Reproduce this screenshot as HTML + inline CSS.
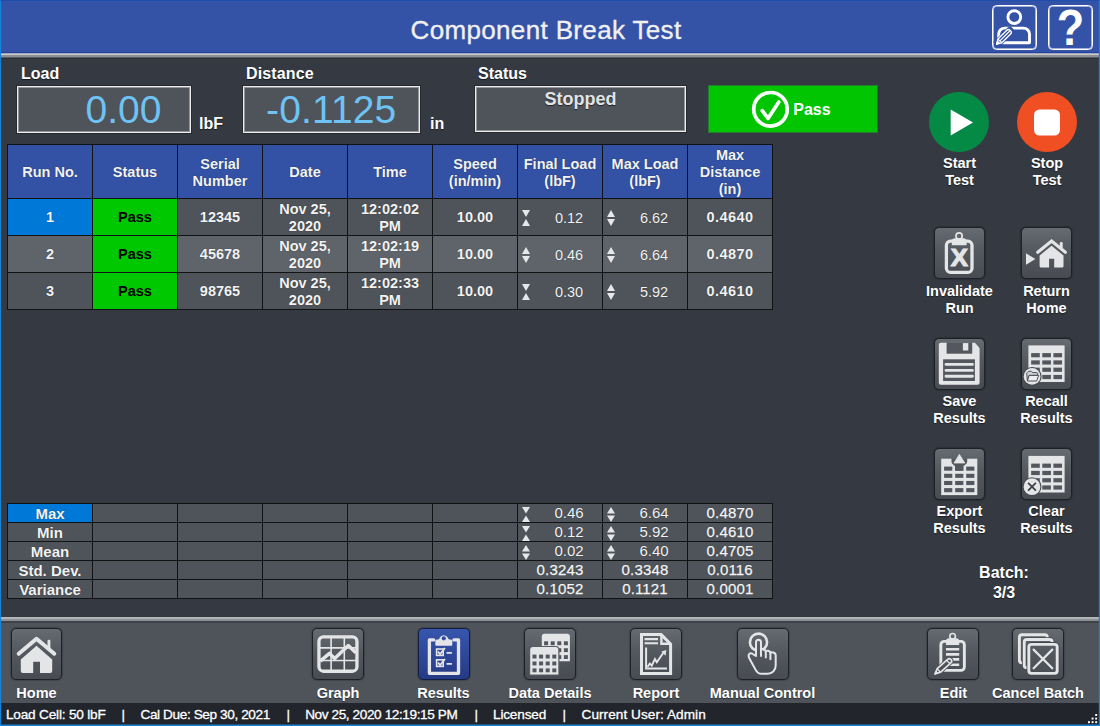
<!DOCTYPE html>
<html>
<head>
<meta charset="utf-8">
<title>Component Break Test</title>
<style>
*{box-sizing:border-box;margin:0;padding:0}
html,body{width:1100px;height:726px;overflow:hidden}
body{background:#353a42;font-family:"Liberation Sans",sans-serif;color:#fff;position:relative;font-weight:bold}
.abs{position:absolute}
#frame{position:absolute;left:0;top:0;width:1100px;height:726px;border:solid #1583d8;border-width:1px 1px 1px 1px;border-top-color:#1f4fae;pointer-events:none;z-index:50;box-shadow:inset 0 -1px 0 rgba(21,131,216,.5), inset -1px 0 0 rgba(21,131,216,.2), inset 1px 0 0 rgba(21,131,216,.12)}
#hdr{position:absolute;left:0;top:0;width:1100px;height:53px;background:#3452a6;border-bottom:1px solid #2342a2}
#hdr .t{position:absolute;left:0;width:1092px;top:15px;text-align:center;font-size:26px;font-weight:normal;color:#f0f0f0;letter-spacing:0.35px;-webkit-text-stroke:0.35px #f0f0f0}
.sep{position:absolute;left:0;width:1100px;height:5px;background:linear-gradient(#b4b7ba,#8d9195 50%,#5a5e64)}
.lbl{position:absolute;font-size:16px;font-weight:bold;color:#fff;white-space:nowrap;text-shadow:0 1px 1px rgba(0,0,0,.6)}
.box{position:absolute;background:#4f545b;border:1px solid #ededee;box-shadow:0 0 0 1px #262a30, inset 0 0 0 1px rgba(255,255,255,.38)}
.big{position:absolute;font-size:39px;font-weight:normal;color:#6ec3f4;white-space:nowrap}
table{position:absolute;border-collapse:collapse;table-layout:fixed}
td,th{border:1px solid #101214;text-align:center;vertical-align:middle;font-size:14.5px;font-weight:bold;color:#f3f3f3;overflow:hidden;padding:0;line-height:17px;text-shadow:0 0 1px rgba(0,0,0,.55)}
th{background:#3351a5;padding-top:2px}
#t1 td{padding-top:1px}
#t1 td{background:#4f545b}
#t1 tr.alt td{background:#5f646b}
#t1 tr td.g{background:#00c800;color:#000;text-shadow:none}
td.sel{background:#0078d7 !important}
td.n{font-weight:normal;position:relative}
#t1 td.n{padding-top:3px}
td.i{padding-left:18px}
#t1 td:last-child{letter-spacing:0.45px}
#t2 td{background:#4f545b;height:19px;line-height:17px;font-size:15px}
#t2 td.n{font-size:15px;letter-spacing:0.15px;-webkit-text-stroke:0.25px #fff}
#t2 td.i{letter-spacing:0;-webkit-text-stroke:0}
#t2 .ic{height:15px;margin-top:-6.5px}
#t2 td.n{padding-bottom:1px}
.ic{position:absolute;left:4px;top:50%;margin-top:-7px;width:8px;height:16px}
.btn{position:absolute;width:51px;height:52px;border:1px solid #1d2024;border-radius:5px;background:linear-gradient(#666b72,#54595f 45%,#484c52);box-shadow:0 0 1.5px rgba(0,0,0,.85)}
.btn svg{display:block}
.btn.act{background:linear-gradient(#3856ad,#2e4899 50%,#253a84);border-color:#131d42}
.hb{width:45px;height:45px;border:1px solid #fff;border-radius:4.5px;box-shadow:inset 0 0 0 1px rgba(255,255,255,.55)}
.bl{position:absolute;font-size:14.5px;font-weight:bold;color:#fff;text-align:center;line-height:17px;white-space:nowrap;text-shadow:0 1px 1px rgba(0,0,0,.5)}
#tb{position:absolute;left:0;top:623px;width:1100px;height:80px;background:#4f545b}
#sb{position:absolute;left:0;top:703px;width:1100px;height:23px;background:#22262c;font-size:13.6px;font-weight:normal;color:#fff;white-space:pre;-webkit-text-stroke:0.3px #fff}
#sb span{position:absolute;top:3.5px}
</style>
</head>
<body>
<div id="hdr"><div class="t">Component Break Test</div></div>
<div class="sep" style="top:53px;height:6px;background:linear-gradient(#a3a8c2 0 1px,#cbc9c0 1px 2px,#8a8f99 2px 4px,#585c63 4px 5px,#2b2e33 5px 6px)"></div>

<div class="lbl" style="left:21px;top:64.5px">Load</div>
<div class="box" style="left:17px;top:86px;width:174px;height:47px"></div>
<div class="big" style="left:85.5px;top:87.5px">0.00</div>
<div class="lbl" style="left:199px;top:115px">lbF</div>

<div class="lbl" style="left:246px;top:64.5px;letter-spacing:0.15px">Distance</div>
<div class="box" style="left:243px;top:86px;width:177px;height:47px"></div>
<div class="big" style="left:266px;top:87.5px;letter-spacing:0.15px">-0.1125</div>
<div class="lbl" style="left:430px;top:115px">in</div>

<div class="lbl" style="left:478px;top:64.5px">Status</div>
<div class="box" style="left:475px;top:86px;width:211px;height:46px"></div>
<div class="lbl" style="left:475px;width:211px;top:88.7px;text-align:center;font-size:18px;color:#e2e3e4">Stopped</div>

<div class="abs" style="left:708px;top:85px;width:170px;height:48px;background:#00c500;border:1px solid #257a32"></div>
<div class="lbl" style="left:793.3px;top:101px;font-size:16px;text-shadow:none">Pass</div>

<table id="t1" style="left:7px;top:144px;width:766px">
<tr style="height:54px"><th>Run No.</th><th>Status</th><th>Serial<br>Number</th><th>Date</th><th>Time</th><th>Speed<br>(in/min)</th><th>Final Load<br>(lbF)</th><th>Max Load<br>(lbF)</th><th>Max<br>Distance<br>(in)</th></tr>
<tr style="height:37px"><td class="sel">1</td><td class="g">Pass</td><td>12345</td><td>Nov 25,<br>2020</td><td>12:02:02<br>PM</td><td>10.00</td><td class="n i"><svg class="ic" viewBox="0 0 8 16" preserveAspectRatio="none"><path d="M0 0 H8 L4 7 Z M4 9 L8 16 H0 Z" fill="#e6e7e9"/></svg>0.12</td><td class="n i"><svg class="ic" viewBox="0 0 8 16" preserveAspectRatio="none"><path d="M4 0 L8 7 H0 Z M0 9 H8 L4 16 Z" fill="#e6e7e9"/></svg>6.62</td><td>0.4640</td></tr>
<tr style="height:37px" class="alt"><td>2</td><td class="g">Pass</td><td>45678</td><td>Nov 25,<br>2020</td><td>12:02:19<br>PM</td><td>10.00</td><td class="n i"><svg class="ic" viewBox="0 0 8 16" preserveAspectRatio="none"><path d="M4 0 L8 7 H0 Z M0 9 H8 L4 16 Z" fill="#e6e7e9"/></svg>0.46</td><td class="n i"><svg class="ic" viewBox="0 0 8 16" preserveAspectRatio="none"><path d="M4 0 L8 7 H0 Z M0 9 H8 L4 16 Z" fill="#e6e7e9"/></svg>6.64</td><td>0.4870</td></tr>
<tr style="height:37px"><td>3</td><td class="g">Pass</td><td>98765</td><td>Nov 25,<br>2020</td><td>12:02:33<br>PM</td><td>10.00</td><td class="n i"><svg class="ic" viewBox="0 0 8 16" preserveAspectRatio="none"><path d="M0 0 H8 L4 7 Z M4 9 L8 16 H0 Z" fill="#e6e7e9"/></svg>0.30</td><td class="n i"><svg class="ic" viewBox="0 0 8 16" preserveAspectRatio="none"><path d="M4 0 L8 7 H0 Z M0 9 H8 L4 16 Z" fill="#e6e7e9"/></svg>5.92</td><td>0.4610</td></tr>
</table>

<table id="t2" style="left:7px;top:503px;width:766px">
<tr><td class="sel">Max</td><td></td><td></td><td></td><td></td><td></td><td class="n i"><svg class="ic" viewBox="0 0 8 16" preserveAspectRatio="none"><path d="M0 0 H8 L4 7 Z M4 9 L8 16 H0 Z" fill="#e6e7e9"/></svg>0.46</td><td class="n i"><svg class="ic" viewBox="0 0 8 16" preserveAspectRatio="none"><path d="M4 0 L8 7 H0 Z M0 9 H8 L4 16 Z" fill="#e6e7e9"/></svg>6.64</td><td class="n">0.4870</td></tr>
<tr><td>Min</td><td></td><td></td><td></td><td></td><td></td><td class="n i"><svg class="ic" viewBox="0 0 8 16" preserveAspectRatio="none"><path d="M0 0 H8 L4 7 Z M4 9 L8 16 H0 Z" fill="#e6e7e9"/></svg>0.12</td><td class="n i"><svg class="ic" viewBox="0 0 8 16" preserveAspectRatio="none"><path d="M4 0 L8 7 H0 Z M0 9 H8 L4 16 Z" fill="#e6e7e9"/></svg>5.92</td><td class="n">0.4610</td></tr>
<tr><td>Mean</td><td></td><td></td><td></td><td></td><td></td><td class="n i"><svg class="ic" viewBox="0 0 8 16" preserveAspectRatio="none"><path d="M4 0 L8 7 H0 Z M0 9 H8 L4 16 Z" fill="#e6e7e9"/></svg>0.02</td><td class="n i"><svg class="ic" viewBox="0 0 8 16" preserveAspectRatio="none"><path d="M4 0 L8 7 H0 Z M0 9 H8 L4 16 Z" fill="#e6e7e9"/></svg>6.40</td><td class="n">0.4705</td></tr>
<tr><td>Std. Dev.</td><td></td><td></td><td></td><td></td><td></td><td class="n">0.3243</td><td class="n">0.3348</td><td class="n">0.0116</td></tr>
<tr><td>Variance</td><td></td><td></td><td></td><td></td><td></td><td class="n">0.1052</td><td class="n">0.1121</td><td class="n">0.0001</td></tr>
</table>

<div class="sep" style="top:617px;height:6px;background:linear-gradient(#b3b5b7 0 2px,#8b9097 2px 4px,#3e4248 4px 6px)"></div>
<div id="tb"></div>
<div id="sb"><span style="left:6px;letter-spacing:-0.19px">Load Cell: 50 lbF</span><span style="left:121.5px">|</span><span style="left:140.5px;letter-spacing:-0.39px">Cal Due: Sep 30, 2021</span><span style="left:286.5px">|</span><span style="left:305.2px;letter-spacing:-0.40px">Nov 25, 2020 12:19:15 PM</span><span style="left:474.5px">|</span><span style="left:493px;letter-spacing:-0.17px">Licensed</span><span style="left:562.5px">|</span><span style="left:581.5px;letter-spacing:0.06px">Current User: Admin</span></div>
<div class="abs" style="left:929px;top:92px;width:60px;height:60px;border-radius:50%;background:#048a45"><svg width="60" height="60" viewBox="0 0 60 60"><path d="M21.7 17.5 L44 30.5 L21.7 43.5 Z" fill="#fff"/></svg></div>
<div class="abs" style="left:1017px;top:92px;width:60px;height:60px;border-radius:50%;background:#f04e23"><svg width="60" height="60" viewBox="0 0 60 60"><rect x="17" y="17.5" width="26" height="26" rx="5.5" fill="#fff"/></svg></div>
<div class="bl" style="left:899.5px;width:120px;top:154.5px">Start<br>Test</div>
<div class="bl" style="left:987.0px;width:120px;top:154.5px">Stop<br>Test</div>
<div class="btn" style="left:934px;top:227px;width:51px"><svg width="49" height="49" viewBox="1.0 0.6 49 49"><rect x="12.4" y="13.7" width="25.6" height="31.3" rx="4.2" fill="none" stroke="#e4e5e7" stroke-width="3.3"/>
<circle cx="25.1" cy="8.6" r="3.1" fill="none" stroke="#e4e5e7" stroke-width="1.7"/>
<path d="M17.8 17.8 V14.2 a3.4 3.4 0 0 1 3.4 -3.4 h8 a3.4 3.4 0 0 1 3.4 3.4 V17.8 Z" fill="#e4e5e7"/>
<text transform="translate(25.2 38.4) scale(1.06 1)" font-family="Liberation Sans,sans-serif" font-weight="bold" font-size="24.2" text-anchor="middle" fill="#e4e5e7" stroke="#e4e5e7" stroke-width="1.1">X</text></svg></div>
<div class="btn" style="left:1021px;top:227px;width:51px"><svg width="49" height="49" viewBox="0.6 0.6 49 49"><path d="M4.6 25.9 L14 31.7 L4.6 37.4 Z" fill="#e4e5e7"/>
<path d="M16.3 24.9 L30.2 13.7 L44 24.9" fill="none" stroke="#e4e5e7" stroke-width="3.2" stroke-linecap="round"/>
<rect x="38.4" y="14.5" width="2.9" height="7" rx="1.2" fill="#e4e5e7"/>
<path d="M30.2 18.4 L42.1 28 V38.6 a1.5 1.5 0 0 1 -1.5 1.5 H32.8 V31.4 H27.7 V40.1 H19.7 a1.5 1.5 0 0 1 -1.5 -1.5 V28 Z" fill="#e4e5e7"/></svg></div>
<div class="bl" style="left:899.5px;width:120px;top:282.6px">Invalidate<br>Run</div>
<div class="bl" style="left:986.5px;width:120px;top:282.6px">Return<br>Home</div>
<div class="btn" style="left:934px;top:338px;width:51px"><svg width="49" height="49" viewBox="1.0 0.6 49 49"><path d="M4.8 6.4 a2 2 0 0 1 2 -2 H40.9 L45.6 9.5 V44.3 a2 2 0 0 1 -2 2 H6.8 a2 2 0 0 1 -2 -2 Z" fill="#e4e5e7"/>
<rect x="12.6" y="4" width="25.6" height="11.3" fill="#54585e"/>
<rect x="28.9" y="4.7" width="5.4" height="7.4" fill="#e4e5e7"/>
<rect x="9.1" y="20.9" width="31.8" height="21.7" fill="#54585e"/>
<path d="M12 26 H38.4 M12 32 H38.4 M12 37.9 H38.4" stroke="#e4e5e7" stroke-width="2.9" stroke-linecap="round"/></svg></div>
<div class="btn" style="left:1021px;top:338px;width:51px"><svg width="49" height="49" viewBox="0.6 0.6 49 49"><rect x="7" y="7.0" width="36.2" height="36.6" fill="#e4e5e7"/><rect x="9.75" y="14.70" width="8.65" height="4.2" fill="#54585e"/><rect x="20.88" y="14.70" width="8.65" height="4.2" fill="#54585e"/><rect x="32.01" y="14.70" width="8.65" height="4.2" fill="#54585e"/><rect x="9.75" y="21.97" width="8.65" height="4.2" fill="#54585e"/><rect x="20.88" y="21.97" width="8.65" height="4.2" fill="#54585e"/><rect x="32.01" y="21.97" width="8.65" height="4.2" fill="#54585e"/><rect x="9.75" y="29.24" width="8.65" height="4.2" fill="#54585e"/><rect x="20.88" y="29.24" width="8.65" height="4.2" fill="#54585e"/><rect x="32.01" y="29.24" width="8.65" height="4.2" fill="#54585e"/><rect x="9.75" y="36.51" width="8.65" height="4.2" fill="#54585e"/><rect x="20.88" y="36.51" width="8.65" height="4.2" fill="#54585e"/><rect x="32.01" y="36.51" width="8.65" height="4.2" fill="#54585e"/><circle cx="10.7" cy="38" r="9.5" fill="#464a50"/><circle cx="10.7" cy="38" r="8.4" fill="#e4e5e7"/>
<path d="M5.3 35 c0 -0.6 0.3 -0.9 0.8 -1.1 l1.1 -1 h2.8 l1.4 1.3 h4 c0.5 0 0.8 0.3 0.8 0.8 V37 H7.7 L6 42.4 Z" fill="#cfd0d3" stroke="#4d5157" stroke-width="1" stroke-linejoin="round"/>
<path d="M7.7 37 H17.3 L15.2 42.6 H6 Z" fill="#eeeeef" stroke="#4d5157" stroke-width="1" stroke-linejoin="round"/></svg></div>
<div class="bl" style="left:899.5px;width:120px;top:393px">Save<br>Results</div>
<div class="bl" style="left:986.5px;width:120px;top:393px">Recall<br>Results</div>
<div class="btn" style="left:934px;top:448px;width:51px"><svg width="49" height="49" viewBox="1.0 0.6 49 49"><rect x="7.2" y="10.3" width="36.1" height="36.4" fill="#e4e5e7"/><rect x="10.10" y="18.20" width="8.2" height="4.1" fill="#54585e"/><rect x="21.15" y="18.20" width="8.2" height="4.1" fill="#54585e"/><rect x="32.20" y="18.20" width="8.2" height="4.1" fill="#54585e"/><rect x="10.10" y="25.37" width="8.2" height="4.1" fill="#54585e"/><rect x="21.15" y="25.37" width="8.2" height="4.1" fill="#54585e"/><rect x="32.20" y="25.37" width="8.2" height="4.1" fill="#54585e"/><rect x="10.10" y="32.54" width="8.2" height="4.1" fill="#54585e"/><rect x="21.15" y="32.54" width="8.2" height="4.1" fill="#54585e"/><rect x="32.20" y="32.54" width="8.2" height="4.1" fill="#54585e"/><rect x="10.10" y="39.71" width="8.2" height="4.1" fill="#54585e"/><rect x="21.15" y="39.71" width="8.2" height="4.1" fill="#54585e"/><rect x="32.20" y="39.71" width="8.2" height="4.1" fill="#54585e"/><path d="M17.5 9.8 H33.2 V13 C33.2 16.2 29.3 16.4 29.3 18.6 V22.3 H21.2 V18.6 C21.2 16.4 17.5 16.2 17.5 13 Z" fill="#54585e"/><path d="M25.4 6 L30.8 14.6 H20 Z" fill="#e4e5e7" stroke="#e4e5e7" stroke-width="0.8" stroke-linejoin="round"/></svg></div>
<div class="btn" style="left:1021px;top:448px;width:51px"><svg width="49" height="49" viewBox="0.6 0.6 49 49"><rect x="7" y="7.5" width="36.2" height="36.6" fill="#e4e5e7"/><rect x="9.75" y="15.20" width="8.65" height="4.2" fill="#54585e"/><rect x="20.88" y="15.20" width="8.65" height="4.2" fill="#54585e"/><rect x="32.01" y="15.20" width="8.65" height="4.2" fill="#54585e"/><rect x="9.75" y="22.47" width="8.65" height="4.2" fill="#54585e"/><rect x="20.88" y="22.47" width="8.65" height="4.2" fill="#54585e"/><rect x="32.01" y="22.47" width="8.65" height="4.2" fill="#54585e"/><rect x="9.75" y="29.74" width="8.65" height="4.2" fill="#54585e"/><rect x="20.88" y="29.74" width="8.65" height="4.2" fill="#54585e"/><rect x="32.01" y="29.74" width="8.65" height="4.2" fill="#54585e"/><rect x="9.75" y="37.01" width="8.65" height="4.2" fill="#54585e"/><rect x="20.88" y="37.01" width="8.65" height="4.2" fill="#54585e"/><rect x="32.01" y="37.01" width="8.65" height="4.2" fill="#54585e"/><circle cx="10.6" cy="38.3" r="9.5" fill="#464a50"/><circle cx="10.6" cy="38.3" r="8.4" fill="#e4e5e7"/>
<path d="M6.7 34.4 L14.5 42.3 M14.5 34.4 L6.7 42.3" stroke="#3a3e44" stroke-width="1.7"/></svg></div>
<div class="bl" style="left:899.5px;width:120px;top:503px">Export<br>Results</div>
<div class="bl" style="left:986.5px;width:120px;top:503px">Clear<br>Results</div>
<div class="bl" style="left:944px;width:120px;top:562.6px;font-size:16px;line-height:20px">Batch:<br>3/3</div>
<div class="btn" style="left:11px;top:628px;width:51px"><svg width="49" height="49" viewBox="1.0 0.6 49 49"><path d="M7.7 25.4 L25.5 10.4 L43.3 25.4" fill="none" stroke="#e4e5e7" stroke-width="4" stroke-linecap="round" stroke-linejoin="round"/>
<rect x="36.5" y="11.4" width="2.9" height="9" rx="1.3" fill="#e4e5e7"/>
<path d="M25.5 17.3 L41.2 31.2 V42.7 a2 2 0 0 1 -2 2 H29 V33.4 H22.2 V44.7 H11.8 a2 2 0 0 1 -2 -2 V31.2 Z" fill="#e4e5e7"/></svg></div>
<div class="bl" style="left:-23.5px;width:120px;top:684.5px">Home</div>
<div class="btn" style="left:312px;top:628px;width:52px"><svg width="49" height="49" viewBox="0.9 0.6 49 49"><rect x="6.85" y="8.55" width="38" height="34.3" rx="4.5" fill="none" stroke="#e4e5e7" stroke-width="3.3"/>
<path d="M19 9 V43 M32.2 9 V43 M7 19.5 H45 M7 32.1 H45" stroke="#e4e5e7" stroke-width="1.6" fill="none"/>
<path d="M8.1 32.7 L17.4 25 L22.6 30 L36.2 17.2 L43.8 24.4" fill="none" stroke="#e4e5e7" stroke-width="3.5" stroke-linejoin="round"/></svg></div>
<div class="bl" style="left:278.0px;width:120px;top:684.5px">Graph</div>
<div class="btn act" style="left:418px;top:628px;width:52px"><svg width="49" height="49" viewBox="0.6 0.6 49 49"><path d="M15.3 11.5 H11 V44.9 H40.1 V11.5 H35.5" fill="none" stroke="#e4e5e7" stroke-width="3.3" stroke-linecap="round" stroke-linejoin="round"/>
<path d="M16.9 16.4 V12.6 a1.6 1.6 0 0 1 1.6 -1.6 h1.2 c1 0 1.2 -0.6 1.6 -1.6 a4.6 4.6 0 0 1 8.2 0 c0.4 1 0.6 1.6 1.6 1.6 h1.2 a1.6 1.6 0 0 1 1.6 1.6 V16.4 a1 1 0 0 1 -1 1 H17.9 a1 1 0 0 1 -1 -1 Z" fill="#e4e5e7"/>
<circle cx="25.4" cy="9.9" r="2.1" fill="#2f4a9e"/>
<rect x="18.2" y="20.6" width="6.6" height="6.4" fill="none" stroke="#e4e5e7" stroke-width="1.6"/>
<rect x="18.2" y="31.4" width="6.6" height="6.6" fill="none" stroke="#e4e5e7" stroke-width="1.6"/>
<path d="M19.6 23.3 l2.1 2.3 l4.9 -6 M19.6 34.3 l2.1 2.3 l4.9 -6" fill="none" stroke="#e4e5e7" stroke-width="1.8"/>
<path d="M28.1 24.5 h5.4 M28.1 35.5 h5.4" stroke="#e4e5e7" stroke-width="1.7"/></svg></div>
<div class="bl" style="left:383.5px;width:120px;top:684.5px">Results</div>
<div class="btn" style="left:524px;top:628px;width:52px"><svg width="49" height="49" viewBox="0.6 0.6 49 49"><path d="M17.4 8.2 a2.8 2.8 0 0 1 2.8 -2.8 h22.5 a2.8 2.8 0 0 1 2.8 2.8 v24.7 h-28.1 Z" fill="#e4e5e7"/><rect x="19.7" y="12.9" width="4" height="3.9" fill="#54585e"/><rect x="26.3" y="12.9" width="4" height="3.9" fill="#54585e"/><rect x="32.9" y="12.9" width="4" height="3.9" fill="#54585e"/><rect x="39.5" y="12.9" width="4" height="3.9" fill="#54585e"/><rect x="19.7" y="19.8" width="4" height="3.9" fill="#54585e"/><rect x="26.3" y="19.8" width="4" height="3.9" fill="#54585e"/><rect x="32.9" y="19.8" width="4" height="3.9" fill="#54585e"/><rect x="39.5" y="19.8" width="4" height="3.9" fill="#54585e"/><rect x="19.7" y="26.7" width="4" height="3.9" fill="#54585e"/><rect x="26.3" y="26.7" width="4" height="3.9" fill="#54585e"/><rect x="32.9" y="26.7" width="4" height="3.9" fill="#54585e"/><rect x="39.5" y="26.7" width="4" height="3.9" fill="#54585e"/><path d="M4.7 47.2 V21.5 a4 4 0 0 1 4 -4 h22.4 a4 4 0 0 1 4 4 V47.2 Z" fill="#585c63"/><path d="M5.8 21.5 a2.8 2.8 0 0 1 2.8 -2.8 h22.5 a2.8 2.8 0 0 1 2.8 2.8 v24.7 h-28.1 Z" fill="#e4e5e7"/><rect x="8.1" y="26.2" width="4" height="3.9" fill="#54585e"/><rect x="14.7" y="26.2" width="4" height="3.9" fill="#54585e"/><rect x="21.3" y="26.2" width="4" height="3.9" fill="#54585e"/><rect x="27.9" y="26.2" width="4" height="3.9" fill="#54585e"/><rect x="8.1" y="33.1" width="4" height="3.9" fill="#54585e"/><rect x="14.7" y="33.1" width="4" height="3.9" fill="#54585e"/><rect x="21.3" y="33.1" width="4" height="3.9" fill="#54585e"/><rect x="27.9" y="33.1" width="4" height="3.9" fill="#54585e"/><rect x="8.1" y="40.0" width="4" height="3.9" fill="#54585e"/><rect x="14.7" y="40.0" width="4" height="3.9" fill="#54585e"/><rect x="21.3" y="40.0" width="4" height="3.9" fill="#54585e"/><rect x="27.9" y="40.0" width="4" height="3.9" fill="#54585e"/></svg></div>
<div class="bl" style="left:490.0px;width:120px;top:684.5px">Data Details</div>
<div class="btn" style="left:630px;top:628px;width:52px"><svg width="49" height="49" viewBox="0.4 0.6 49 49"><path d="M10.9 6.2 H30.6 L40 15.6 V45 H10.9 Z" fill="none" stroke="#e4e5e7" stroke-width="3" stroke-linejoin="miter"/>
<path d="M30.8 6.5 V15.4 H40" fill="none" stroke="#e4e5e7" stroke-width="2.4"/>
<path d="M14 10.7 H27.4 M14 14.9 H27.4" stroke="#e4e5e7" stroke-width="2.1"/>
<path d="M15.5 19 V40.1 H36.4" fill="none" stroke="#e4e5e7" stroke-width="2"/>
<path d="M16.9 38.6 L19.2 35.1 L21.2 37.2 L24.3 30.6 L26.2 33.9 L32.6 24.6" fill="none" stroke="#e4e5e7" stroke-width="1.9"/>
<path d="M35.7 21.5 L34.9 27.3 L30.7 23.1 Z" fill="#e4e5e7"/></svg></div>
<div class="bl" style="left:596.0px;width:120px;top:684.5px">Report</div>
<div class="btn" style="left:737px;top:628px;width:52px"><svg width="49" height="49" viewBox="1.0 0.6 49 49"><defs><linearGradient id="g1" gradientUnits="userSpaceOnUse" x1="0" y1="0" x2="0" y2="51"><stop offset="0" stop-color="#666b72"/><stop offset="0.45" stop-color="#54595f"/><stop offset="1" stop-color="#484c52"/></linearGradient></defs><circle cx="21.5" cy="13.8" r="8.6" fill="none" stroke="#e4e5e7" stroke-width="2.6"/>
<path d="M19 27.6 V13.8 a2.5 2.5 0 0 1 5 0 V21.9 c0.3 -1.5 4.5 -1.3 4.8 1.2 c0.4 -1.4 4.3 -1.1 4.6 1.6 c0.6 -1.3 5.2 -1 5.3 2.2 V36.8 c0 5 -3.5 8.6 -8 8.6 H24.5 c-3 0 -4.6 -1.5 -6 -4.2 L12.3 29.8 c-1.2 -2.4 -0.6 -4.2 0.6 -4.7 c1.4 -0.5 2.7 0.1 3.7 1.1 Z" fill="url(#g1)" stroke="#e4e5e7" stroke-width="2" stroke-linejoin="round"/>
<path d="M24 21.5 V27.6 M28.8 23 V29.2 M33.4 24.6 V30.8" stroke="#e4e5e7" stroke-width="2" fill="none" stroke-linecap="round"/></svg></div>
<div class="bl" style="left:702.5px;width:120px;top:684.5px">Manual Control</div>
<div class="btn" style="left:927px;top:628px;width:52px"><svg width="49" height="49" viewBox="0.5 0.6 49 49"><defs><linearGradient id="g2" gradientUnits="userSpaceOnUse" x1="0" y1="0" x2="0" y2="51"><stop offset="0" stop-color="#666b72"/><stop offset="0.45" stop-color="#54595f"/><stop offset="1" stop-color="#484c52"/></linearGradient></defs><rect x="13.35" y="13" width="23.5" height="29" rx="3.4" fill="none" stroke="#e4e5e7" stroke-width="2.9"/>
<circle cx="25.1" cy="7.9" r="2.8" fill="none" stroke="#e4e5e7" stroke-width="1.6"/>
<path d="M18.5 16.5 V13 a3.1 3.1 0 0 1 3.1 -3.1 h7 a3.1 3.1 0 0 1 3.1 3.1 V16.5 Z" fill="#e4e5e7"/>
<path d="M18.5 20.9 H31.7 M18.5 26 H31.7 M21 31 H31.7 M21 36.4 H31.7" stroke="#e4e5e7" stroke-width="2.6"/>
<g transform="translate(7.4 45.6) rotate(-42)"><path d="M-1.6 0 L5 -4 H19.5 a4 4 0 0 1 0 8 H5 Z" fill="#4f5359"/><path d="M0 0 L5.2 -2.4 H19.3 a2.4 2.4 0 0 1 0 4.8 H5.2 Z" fill="none" stroke="#e4e5e7" stroke-width="1.7" stroke-linejoin="round"/><path d="M5.2 -2.4 V2.4 M18 -2.4 V2.4" stroke="#e4e5e7" stroke-width="1.3" fill="none"/><path d="M0 0 L2.8 -1.3 V1.3 Z" stroke="#e4e5e7" stroke-width="0.8" fill="#e4e5e7"/></g></svg></div>
<div class="bl" style="left:893.5px;width:120px;top:684.5px">Edit</div>
<div class="btn" style="left:1012px;top:628px;width:52px"><svg width="49" height="49" viewBox="0.6 0.6 49 49"><defs><linearGradient id="g3" gradientUnits="userSpaceOnUse" x1="0" y1="0" x2="0" y2="51"><stop offset="0" stop-color="#666b72"/><stop offset="0.45" stop-color="#54595f"/><stop offset="1" stop-color="#484c52"/></linearGradient></defs><rect x="7" y="6.4" width="27.9" height="28.1" rx="2.6" fill="url(#g3)" stroke="#e4e5e7" stroke-width="2.9"/>
<rect x="11.8" y="11.1" width="28" height="28.3" rx="2.6" fill="none" stroke="#43474d" stroke-width="4.6"/><rect x="11.8" y="11.1" width="28" height="28.3" rx="2.6" fill="url(#g3)" stroke="#e4e5e7" stroke-width="2.9"/>
<rect x="16.4" y="16" width="28.4" height="29" rx="2.6" fill="none" stroke="#43474d" stroke-width="4.6"/><rect x="16.4" y="16" width="28.4" height="29" rx="2.6" fill="url(#g3)" stroke="#e4e5e7" stroke-width="2.9"/>
<path d="M21.2 21.2 L39.9 39.9 M39.9 21.2 L21.2 39.9" stroke="#e4e5e7" stroke-width="2.2" fill="none" stroke-linecap="round"/></svg></div>
<div class="bl" style="left:978.0px;width:120px;top:684.5px">Cancel Batch</div>
<div class="abs hb" style="left:992px;top:5px"><svg width="43" height="43" viewBox="1 1 43 43" style="display:block">
<circle cx="22.3" cy="12.1" r="6.4" fill="none" stroke="#fff" stroke-width="2.9"/>
<path d="M6.7 37.7 V29.1 a6 6 0 0 1 6 -6 H31.5 a6 6 0 0 1 6 6 V37.7 Z" fill="none" stroke="#fff" stroke-width="2.9" stroke-linejoin="round"/>
<g transform="translate(4.7 39.1) rotate(-45)"><path d="M-1 -4 H19.5 a3 3 0 0 1 3 3 V1 a3 3 0 0 1 -3 3 H-1 Z" fill="#3351a5"/><path d="M0 0 L4.5 -2.7 H17 a2.2 2.2 0 0 1 2.2 2.2 V0.5 a2.2 2.2 0 0 1 -2.2 2.2 H4.5 Z" fill="none" stroke="#fff" stroke-width="1.4" stroke-linejoin="round"/><path d="M4.5 -2.6 V2.6 M4.5 0 H18.5 M0 0 L2.6 -1.4 V1.4 Z" stroke="#fff" stroke-width="1.2" fill="#fff"/></g>
</svg></div>
<div class="abs hb" style="left:1048px;top:5px"><svg width="43" height="43" viewBox="1 1 43 43" style="display:block"><text transform="translate(22.5 40.1) scale(0.9 1.01)" x="0" y="0" font-family="Liberation Sans,sans-serif" font-weight="bold" font-size="50" text-anchor="middle" fill="#fff">?</text></svg></div>
<svg class="abs" style="left:750px;top:89px" width="42" height="42" viewBox="0 0 42 42"><circle cx="20.5" cy="20.3" r="16.8" fill="none" stroke="#fff" stroke-width="3.7"/><path d="M12.2 21.6 L18 29.4 L28.8 13" fill="none" stroke="#fff" stroke-width="3.7" stroke-linecap="round" stroke-linejoin="round"/></svg>
<svg class="abs" style="left:1086px;top:712px" width="13" height="13" viewBox="0 0 13 13"><rect x="9.799999999999999" y="2.6" width="2" height="2" fill="#0a0c0e"/><rect x="9.2" y="2" width="2" height="2" fill="#fff"/><rect x="6.199999999999999" y="6.199999999999999" width="2" height="2" fill="#0a0c0e"/><rect x="5.6" y="5.6" width="2" height="2" fill="#fff"/><rect x="9.799999999999999" y="6.199999999999999" width="2" height="2" fill="#0a0c0e"/><rect x="9.2" y="5.6" width="2" height="2" fill="#fff"/><rect x="2.6" y="9.799999999999999" width="2" height="2" fill="#0a0c0e"/><rect x="2" y="9.2" width="2" height="2" fill="#fff"/><rect x="6.199999999999999" y="9.799999999999999" width="2" height="2" fill="#0a0c0e"/><rect x="5.6" y="9.2" width="2" height="2" fill="#fff"/><rect x="9.799999999999999" y="9.799999999999999" width="2" height="2" fill="#0a0c0e"/><rect x="9.2" y="9.2" width="2" height="2" fill="#fff"/></svg>
<div id="frame"></div>
</body>
</html>
